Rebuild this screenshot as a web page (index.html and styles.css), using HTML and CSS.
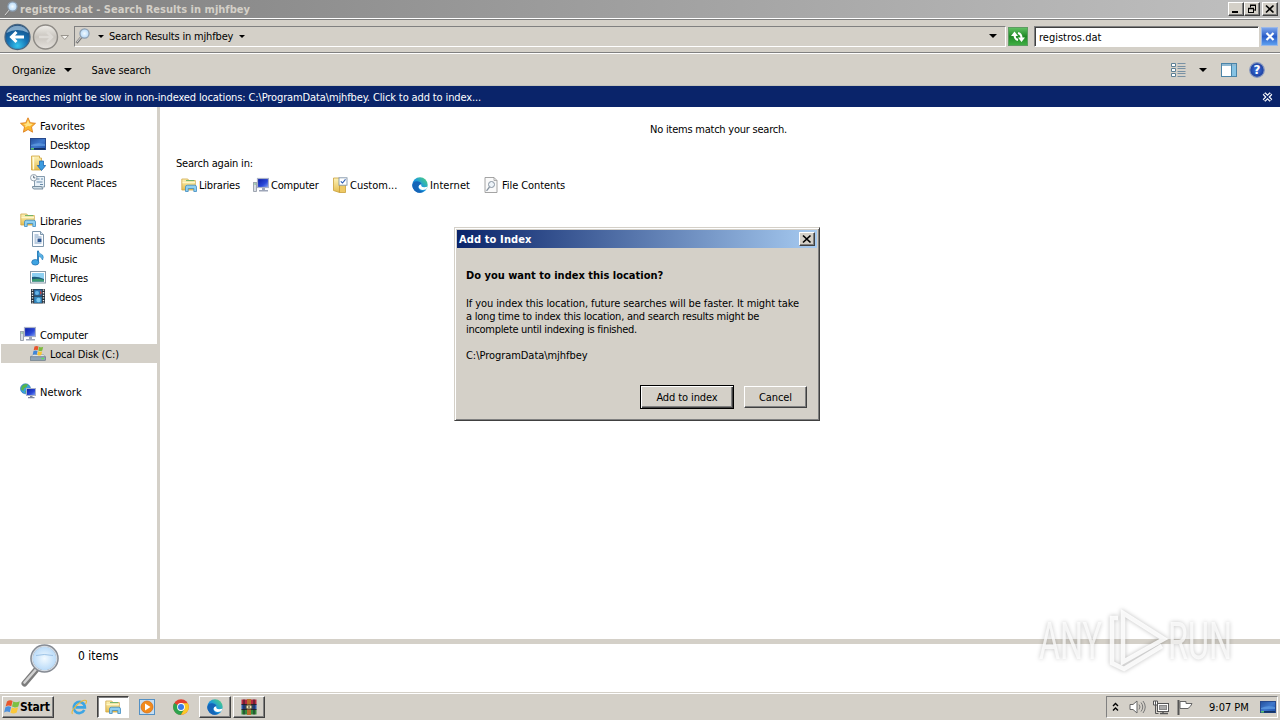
FILE: index.html
```html
<!DOCTYPE html>
<html lang="en">
<head>
    <meta charset="utf-8">
    <title>registros.dat - Search Results in mjhfbey</title>
    <link rel="stylesheet" href="styles.css">
</head>
<body>
    <!-- icon sprites -->
    <svg class="sprites" width="0" height="0">
        <defs>
            <linearGradient id="gFolder" x1="0" y1="0" x2="0" y2="1"><stop offset="0" stop-color="#fdf3b8"/><stop offset="1" stop-color="#e5bd4f"/></linearGradient>
            <linearGradient id="gScreen" x1="0" y1="0" x2="1" y2="1"><stop offset="0" stop-color="#24509c"/><stop offset=".5" stop-color="#3f78cc"/><stop offset="1" stop-color="#1c4faa"/></linearGradient>
            <linearGradient id="gMonitor" x1="0" y1="0" x2="1" y2="1"><stop offset="0" stop-color="#0a1aa0"/><stop offset=".6" stop-color="#2a48d8"/><stop offset="1" stop-color="#8aa8f8"/></linearGradient>
            <radialGradient id="gLens"><stop offset="0" stop-color="#f2faff"/><stop offset="1" stop-color="#b4d8f8"/></radialGradient>
            <linearGradient id="gEdge" x1="0" y1="1" x2="1" y2="0"><stop offset="0" stop-color="#0f5cb8"/><stop offset=".5" stop-color="#1c9ade"/><stop offset="1" stop-color="#54d870"/></linearGradient>
            <radialGradient id="gBack" cx=".5" cy=".85" r=".8"><stop offset="0" stop-color="#35c4ee"/><stop offset=".5" stop-color="#1773b4"/><stop offset="1" stop-color="#164a80"/></radialGradient>
            <linearGradient id="gFwd" x1="0" y1="0" x2="0" y2="1"><stop offset="0" stop-color="#f0eeea"/><stop offset=".5" stop-color="#c9c5be"/><stop offset="1" stop-color="#e6e3de"/></linearGradient>
            <radialGradient id="gHelp"><stop offset="0" stop-color="#3e74e0"/><stop offset="1" stop-color="#1a3c9c"/></radialGradient>
        </defs>
        <symbol id="search" viewBox="0 0 16 16">
            <path d="M1.5 15L6.5 9" stroke="#777" stroke-width="2.6"/>
            <path d="M1.8 14.2L6.2 9" stroke="#ddd" stroke-width="1"/>
            <circle cx="9.5" cy="5.5" r="4.6" fill="url(#gLens)" stroke="#8b9db0" stroke-width="1.2"/>
        </symbol>
        <symbol id="star" viewBox="0 0 16 16">
            <path d="M8 .8l2.2 4.9 5.3.6-4 3.6 1.1 5.3L8 12.5l-4.6 2.7 1.1-5.3-4-3.6 5.3-.6z" fill="#fbb72c" stroke="#de8124" stroke-width=".9"/>
            <path d="M8 3l1.4 3.6 3.4.4-3 2.2L8 9 5 10.5 5.6 8 3 7l3.6-.4z" fill="#ffe48a"/>
        </symbol>
        <symbol id="desktop" viewBox="0 0 16 16">
            <rect x=".5" y="2.5" width="15" height="11" fill="url(#gScreen)" stroke="#27498c"/>
            <path d="M1 9q6-3 14-1v2H1z" fill="#69a7e8" opacity=".6"/>
            <rect x="1" y="12" width="14" height="1.6" fill="#123265"/><rect x="1" y="12" width="3" height="1.6" fill="#58c070"/>
        </symbol>
        <symbol id="downloads" viewBox="0 0 16 16">
            <path d="M1.5 1h8v2h2v12h-10z" fill="url(#gFolder)" stroke="#d1a33d" stroke-width=".8"/>
            <path d="M3.5 2v12.5" stroke="#fffbe0" stroke-width="1.4"/>
            <path d="M9.5 6h4v4.5h2.2L11.5 15.5 7.3 10.5h2.2z" fill="#3b9be0" stroke="#1c65ae" stroke-width=".8"/>
        </symbol>
        <symbol id="recent" viewBox="0 0 16 16">
            <path d="M4.5 2.5h10v10.5h-10z" fill="#e8f1f8" stroke="#7890a4" stroke-width=".9"/>
            <path d="M6.5 5h3M11 5h2M6.5 8h6M10 10.5h3" stroke="#6789a8" stroke-width="1.2"/>
            <path d="M2.5 12.5h9l1.5 2.5h-9q-2-.5-1.5-2.5z" fill="#cfdde6" stroke="#6f8798" stroke-width=".9"/>
            <circle cx="3.7" cy="3.7" r="3.2" fill="#f8fbfd" stroke="#8c9aa6" stroke-width=".9"/>
            <path d="M3.7 1.7v2.2h1.6" fill="none" stroke="#567"/>
        </symbol>
        <symbol id="libraries" viewBox="0 0 16 16">
            <path d="M.8 2h6l1 1.5h6.5V13H.8z" fill="url(#gFolder)" stroke="#cfa748" stroke-width=".8"/>
            <path d="M5 3.6h8" stroke="#6ab26a"/><path d="M1.5 5.5h12.5" stroke="#fff6c8" stroke-width="1.4"/>
            <path d="M4.5 14.5V10q0-1.8 1.8-1.8h7.4q1.8 0 1.8 1.8v4.5h-2.7V11.5H7.2v3z" fill="#8fd0f1" stroke="#3f8bc0" stroke-width=".8"/>
        </symbol>
        <symbol id="documents" viewBox="0 0 16 16">
            <path d="M2.5.5h8L13.5 3.5v12h-11z" fill="#fbfdff" stroke="#7f97ac"/>
            <path d="M10.5.5v3h3" fill="#d5e4f0" stroke="#7f97ac"/>
            <path d="M4.5 4h4M4.5 6h7M4.5 8h2M4.5 10h2M4.5 12h7" stroke="#6a90b8" stroke-width=".9"/>
            <rect x="7.5" y="7.5" width="4" height="3.5" fill="#2c5590"/>
        </symbol>
        <symbol id="music" viewBox="0 0 16 16">
            <path d="M8 1v11" stroke="#1f78b8" stroke-width="1.8"/>
            <path d="M8 .5q.5 3 4.5 4.5 1.5 2 0 5Q11.5 6.500 8 6z" fill="#58b2e6" stroke="#1f78b8" stroke-width=".6"/>
            <ellipse cx="5.3" cy="12.3" rx="3.6" ry="2.8" fill="#3fa4e2" stroke="#1c6cab" stroke-width=".7"/>
        </symbol>
        <symbol id="pictures" viewBox="0 0 16 16">
            <rect x=".5" y="2.5" width="15" height="11.5" fill="#fff" stroke="#8a9aa8"/>
            <rect x="2" y="4" width="12" height="8.5" fill="#8ed0f2"/>
            <path d="M2 8q5-1 12 2v2.5H2z" fill="#1e5c7c"/><path d="M2 10.5q6-1.500 12 .5v1.500H2z" fill="#3c9c70"/>
        </symbol>
        <symbol id="videos" viewBox="0 0 16 16">
            <rect x="1" y="1" width="14" height="14.5" fill="#26313d"/>
            <path d="M2.5 1.5v14M13.5 1.5v14" stroke="#eee" stroke-width="1.4" stroke-dasharray="1.3 1.3"/>
            <rect x="4.2" y="1.6" width="7.6" height="6" fill="#2f72ae"/><rect x="4.2" y="8.6" width="7.6" height="6.3" fill="#3388c0"/>
            <circle cx="7" cy="5" r="2" fill="#65b6e8"/><circle cx="8.5" cy="12" r="2.2" fill="#7dcaf0"/><path d="M10 2l2 3-2 2z" fill="#b54747"/>
        </symbol>
        <symbol id="computer" viewBox="0 0 16 16">
            <rect x=".6" y="5.500" width="2.8" height="9" fill="#d9dde3" stroke="#8b93a0" stroke-width=".8"/><path d="M1.500 7h1.200" stroke="#3a4"/>
            <rect x="4.5" y="1.5" width="11" height="9" fill="url(#gMonitor)" stroke="#aab2c8" stroke-width="1.2"/>
            <path d="M9 11h3v2h3v1.500H6V13h3z" fill="#9da5b8"/>
        </symbol>
        <symbol id="disk" viewBox="0 0 16 16">
            <path d="M3 9.5h10.5l2 2.5H.8z" fill="#dfe5ea" stroke="#8a97a3" stroke-width=".6"/>
            <rect x=".6" y="11.8" width="14.9" height="3.5" fill="#8fa4b4" stroke="#5c6f80" stroke-width=".6"/><path d="M11.5 13.5h2.5" stroke="#5e5" stroke-width="1.3"/>
            <path d="M4.5 1.500q2-1.200 4 0l-.8 3.800q-2-1-4 0z" fill="#e8532c"/><path d="M9 1.800q2 1 4.200 0L12.300 5.500q-2 1-4 0z" fill="#7cba3c"/>
            <path d="M3.500 6q2-1 4 0L6.700 9.800q-2-1-4 0z" fill="#3f86d8"/><path d="M8.100 6.300q2 1 4 0l-.8 3.700q-2 1-4 0z" fill="#f8c52c"/>
        </symbol>
        <symbol id="network" viewBox="0 0 16 16">
            <circle cx="5.5" cy="5.800" r="5" fill="#3aa0de" stroke="#256aa8" stroke-width=".6"/>
            <path d="M2 3q3-3 6-1.500L6.500 4 4 5.500 3.500 8 1 6.500zM5 8l3 1-2 1.700z" fill="#56b64a"/>
            <rect x="6.500" y="5.500" width="9" height="7" fill="url(#gMonitor)" stroke="#aab2c8"/><path d="M10 13h2.500v1h2v1.300H8V14h2z" fill="#7d859a"/>
        </symbol>
        <symbol id="custom" viewBox="0 0 16 16">
            <path d="M1.500 1h6v14.500l-6-2z" fill="url(#gFolder)" stroke="#c99f3a" stroke-width=".8"/>
            <path d="M7.500 7h6v8.500h-6z" fill="#eec965" stroke="#c99f3a" stroke-width=".8"/>
            <rect x="7" y=".8" width="8" height="7.4" fill="#fff" stroke="#8195a8" stroke-width=".9"/><path d="M8.800 4.300l1.700 1.700 3-3.600" fill="none" stroke="#2a5bb5" stroke-width="1.1"/>
        </symbol>
        <symbol id="edge" viewBox="0 0 16 16">
            <circle cx="8" cy="8" r="7.7" fill="url(#gEdge)"/>
            <path d="M.3 8Q1 3.800 5.500 4.200 9.500 4.800 9.500 8 7 7 6.300 9.500 6 14 11.500 14.800 4 17.500 1.200 11.500.2 10 .3 8z" fill="#1465b8"/>
            <path d="M9.300 7.200Q8.300 11.300 15.500 9.800L14.300 12.300Q8 14.500 6.500 10 6.800 7.500 9.300 7.200z" fill="#fff"/>
        </symbol>
        <symbol id="filec" viewBox="0 0 16 16">
            <path d="M2 .5h9L14 3.500v12H2z" fill="#fafafa" stroke="#9a9a9a" stroke-width=".9"/><path d="M11 .5v3h3" fill="none" stroke="#9a9a9a" stroke-width=".8"/>
            <circle cx="8.5" cy="7.5" r="3" fill="#eef4f9" stroke="#8793a0"/><path d="M6.500 10L3.500 13.800" stroke="#8793a0" stroke-width="1.3"/>
        </symbol>
        <symbol id="ie" viewBox="0 0 16 16">
            <path d="M13.300 11A5.600 5.600 0 1 1 13.900 8.400H4.500" fill="none" stroke="#3ca5e4" stroke-width="2.6"/>
            <path d="M1.500 15Q-.5 12.500 5.500 6.500 12 .3 15 1.500 16.200 2.500 14.500 5" fill="none" stroke="#e9b93a" stroke-width="1.1"/>
        </symbol>
        <symbol id="wmp" viewBox="0 0 16 16">
            <rect x=".5" y=".5" width="15" height="15" fill="#c6def2" stroke="#5390c4"/>
            <circle cx="8" cy="8" r="6" fill="#f28a1c" stroke="#d46a10" stroke-width=".7"/><path d="M6 4.500v7L11.500 8z" fill="#fff"/>
        </symbol>
        <symbol id="chrome" viewBox="0 0 16 16">
            <circle cx="8" cy="8" r="7.8" fill="#e3402f"/>
            <path d="M8 8L1.200 4.100A7.800 7.800 0 0 0 8 15.800L11.400 10z" fill="#2da34e"/>
            <path d="M8 4.300h6.900A7.800 7.800 0 0 1 8 15.800L11.400 10z" fill="#fbca28"/>
            <circle cx="8" cy="8" r="3.9" fill="#fff"/><circle cx="8" cy="8" r="3" fill="#3b7ce8"/>
        </symbol>
        <symbol id="rar" viewBox="0 0 16 16">
            <rect x=".5" y=".5" width="15" height="5" fill="#b52840"/><rect x=".5" y="5.5" width="15" height="5" fill="#2c56a8"/><rect x=".5" y="10.5" width="15" height="5" fill="#348a3c"/>
            <path d="M.5 5.500h15M.5 10.500h15M3 .5v15M13 .5v15" stroke="#1c1c28" stroke-width=".9"/>
            <rect x="6" y="0" width="4" height="16" fill="#b96d2c"/><rect x="5" y="6" width="6" height="4" fill="#f1e2b8" stroke="#332"/><path d="M8 7v2" stroke="#332"/>
        </symbol>
        <symbol id="flag" viewBox="0 0 16 16">
            <path d="M3 2.500Q6 .3 8.600 2L7.300 7.300Q4.500 5.600 1.600 7.500z" fill="#e8562c"/>
            <path d="M9.300 2.400Q12 4 15.800 2.200L14.300 7.400Q11 9.300 8 7.600z" fill="#7cc043"/>
            <path d="M1.400 8.300Q4.500 6.500 7.100 8.100L5.800 13.300Q3 11.600.1 13.500z" fill="#4b90dd"/>
            <path d="M7.800 8.500Q11 10 14.100 8.300L12.700 13.500Q9.500 15.300 6.500 13.700z" fill="#fbc83a"/>
        </symbol>
    </svg>

    <div class="titlebar">
        <svg class="ico"><use href="#search"/></svg>
        <span class="title">registros.dat - Search Results in mjhfbey</span>
        <div class="winbtns">
            <span class="winbtn"><svg width="12" height="10"><path d="M2 8h6" stroke="#000" stroke-width="2"/></svg></span>
            <span class="winbtn"><svg width="12" height="10"><path d="M4 1.500h6M4.500 1v2.500M9.500 1v5.500M8 6h2M2 4.500h6M2.500 4v5M7.500 4v5M2 8.500h6" fill="none" stroke="#000"/><path d="M4 1.200h6M2 4.500h6" stroke="#000" stroke-width="1.6"/></svg></span>
            <span class="winbtn close"><svg width="12" height="10"><path d="M2 1.500l7.500 7M9.500 1.500l-7.500 7" stroke="#000" stroke-width="1.7"/></svg></span>
        </div>
    </div>

    <div class="navbar">
        <svg class="travel" viewBox="0 0 70 30">
            <circle cx="17.5" cy="15" r="12.5" fill="url(#gBack)" stroke="#4a6680" stroke-width="1.3"/>
            <path d="M6.500 11Q17 5 28.500 11 26 4 17.500 3.800 9 4 6.500 11z" fill="#b9d6ea" opacity=".65"/>
            <path d="M11 15h13M16.500 10l-5 5 5 5" fill="none" stroke="#fff" stroke-width="3"/>
            <circle cx="45.5" cy="15" r="12" fill="url(#gFwd)" stroke="#8d8a85" stroke-width="1.4"/>
            <path d="M39 15h13M47 10l5 5-5 5" fill="none" stroke="#dedbd6" stroke-width="2.5"/>
            <path d="M61 13.500h7.500l-3.700 4z" fill="#f6f4f0" stroke="#99958e"/>
        </svg>
        <div class="address">
            <svg class="ico"><use href="#search"/></svg>
            <i class="arrow"></i>
            <span class="crumb">Search Results in mjhfbey</span>
            <i class="arrow"></i>
            <i class="arrow drop"></i>
        </div>
        <span class="refresh"><svg width="20" height="19" viewBox="0 0 20 19"><path d="M3 9L6.500 4.500 10 9zM10 10.500l3.500 4.500 3.500-4.500z" fill="#fff"/><path d="M6.500 8q0 4 3.500 5M13.500 11q0-4-3.500-5" stroke="#fff" stroke-width="2" fill="none"/></svg></span>
        <div class="searchbox">registros.dat</div>
        <span class="clear"><svg width="16" height="17"><path d="M4.500 5l7 7M11.500 5l-7 7" stroke="#fff" stroke-width="2.2"/></svg></span>
    </div>

    <div class="toolbar">
        <span class="organize">Organize</span><i class="arrow big"></i>
        <span class="save">Save search</span>
        <div class="tools">
            <svg width="15" height="15"><path d="M.5 .5h4v3h-4zM.5 5.500h4v3h-4zM.5 10.500h4v3h-4z" fill="#fff" stroke="#5c7f94"/><path d="M6.500 .5h8M6.500 3.500h8M6.500 5.500h8M6.500 8.500h8M6.500 10.500h8M6.500 13.500h8" stroke="#7891a4"/></svg>
            <i class="arrow big"></i>
            <svg class="pane" width="16" height="14"><rect x=".5" y=".5" width="15" height="13" fill="#fff" stroke="#4a84a8"/><path d="M1 2h14" stroke="#8fb9d3" stroke-width="2"/><rect x="11" y="3" width="4" height="10" fill="#86c3e4"/><path d="M10.500 1v12" stroke="#4a84a8"/></svg>
            <svg width="16" height="16"><circle cx="8" cy="8" r="7.3" fill="url(#gHelp)" stroke="#8798c0" stroke-width="1.2"/><text x="8" y="12.3" text-anchor="middle" class="q">?</text></svg>
        </div>
    </div>

    <div class="infobar">
        <span>Searches might be slow in non-indexed locations: C:\ProgramData\mjhfbey. Click to add to index...</span>
        <svg width="11" height="10"><path d="M2 1.500l7 7M9 1.500l-7 7" stroke="#fff" stroke-width="3.8"/><path d="M2.300 1.800l6.400 6.400M8.700 1.800l-6.400 6.400" stroke="#0a246a" stroke-width="1.3"/></svg>
    </div>

    <div class="main">
        <div class="sidebar">
            <div class="row"><svg class="ico"><use href="#star"/></svg><span class="loose">Favorites</span></div>
            <div class="row sub"><svg class="ico"><use href="#desktop"/></svg><span>Desktop</span></div>
            <div class="row sub"><svg class="ico"><use href="#downloads"/></svg><span>Downloads</span></div>
            <div class="row sub"><svg class="ico"><use href="#recent"/></svg><span>Recent Places</span></div>
            <div class="row head"><svg class="ico"><use href="#libraries"/></svg><span>Libraries</span></div>
            <div class="row sub"><svg class="ico"><use href="#documents"/></svg><span>Documents</span></div>
            <div class="row sub"><svg class="ico"><use href="#music"/></svg><span>Music</span></div>
            <div class="row sub"><svg class="ico"><use href="#pictures"/></svg><span>Pictures</span></div>
            <div class="row sub"><svg class="ico"><use href="#videos"/></svg><span>Videos</span></div>
            <div class="row head"><svg class="ico"><use href="#computer"/></svg><span>Computer</span></div>
            <div class="row sub selected"><svg class="ico"><use href="#disk"/></svg><span>Local Disk (C:)</span></div>
            <div class="row head"><svg class="ico"><use href="#network"/></svg><span class="loose">Network</span></div>
        </div>
        <div class="content">
            <p class="empty">No items match your search.</p>
            <p class="again">Search again in:</p>
            <div class="places">
                <span class="place p1"><svg class="ico"><use href="#libraries"/></svg>Libraries</span>
                <span class="place p2"><svg class="ico"><use href="#computer"/></svg>Computer</span>
                <span class="place p3"><svg class="ico"><use href="#custom"/></svg>Custom...</span>
                <span class="place p4"><svg class="ico"><use href="#edge"/></svg>Internet</span>
                <span class="place p5"><svg class="ico"><use href="#filec"/></svg>File Contents</span>
            </div>
        </div>
    </div>

    <div class="details">
        <svg width="40" height="44" viewBox="0 0 40 44">
            <path d="M4.500 39.500L16 26" stroke="#7c7c7c" stroke-width="6" stroke-linecap="round"/><path d="M4.500 38.500L15.500 26" stroke="#d2d2d2" stroke-width="2.6" stroke-linecap="round"/>
            <circle cx="24.5" cy="14.5" r="13" fill="url(#gLens)" stroke="#858a92" stroke-width="2.6"/><circle cx="24.5" cy="14.5" r="12.2" fill="none" stroke="#d5dce4" stroke-width="1.2"/>
            <path d="M16 11.500q8-2 17 0" fill="none" stroke="#9dc3e6"/>
        </svg>
        <span>0 items</span>
    </div>

    <div class="taskbar">
        <div class="start"><svg width="16" height="16"><use href="#flag"/></svg><span>Start</span></div>
        <div class="task"><svg class="ico"><use href="#ie"/></svg></div>
        <div class="task active"><svg class="ico"><use href="#libraries"/></svg></div>
        <div class="task"><svg class="ico"><use href="#wmp"/></svg></div>
        <div class="task"><svg class="ico"><use href="#chrome"/></svg></div>
        <div class="task raised"><svg class="ico"><use href="#edge"/></svg></div>
        <div class="task raised"><svg class="ico"><use href="#rar"/></svg></div>
        <div class="tray">
            <svg width="7" height="10"><path d="M1 4l2.500-2.500L6 4M1 8.500L3.500 6 6 8.500" fill="none" stroke="#000" stroke-width="1.4"/></svg>
            <svg class="vol" width="17" height="14"><path d="M1 4.500h3L8 1v12L4 9.500H1z" fill="#fff" stroke="#666"/><path d="M10 4.500q2 2.500 0 5M12 2.500q3.500 4.500 0 9M14 1q4.500 6 0 12" fill="none" stroke="#777"/></svg>
            <svg class="net" width="16" height="15"><rect x="4.5" y="3.5" width="11" height="8" fill="#fff" stroke="#555"/><rect x="6.500" y="5.500" width="7" height="4" fill="#aaa" stroke="#888"/><path d="M7 13.500h8M10 12v2" stroke="#555" stroke-width="1.5"/><path d="M.5 1v4h4V1z" fill="#fff" stroke="#555"/><path d="M2.500 1v12.500h3" fill="none" stroke="#555"/></svg>
            <svg class="alert" width="17" height="15"><path d="M1.500 0v15" stroke="#555" stroke-width="2"/><path d="M3 1.500h6v2h6q-1 3-4 5H3z" fill="#fff" stroke="#666"/></svg>
            <span class="clock">9:07 PM</span>
            <svg class="ico"><use href="#desktop"/></svg>
        </div>
    </div>

    <div class="dialog">
        <div class="dlg-title"><span>Add to Index</span><span class="winbtn"><svg width="12" height="10"><path d="M2 1.500l7.500 7M9.500 1.500l-7.500 7" stroke="#000" stroke-width="1.7"/></svg></span></div>
        <div class="dlg-body">
            <h1>Do you want to index this location?</h1>
            <p><span class="l1">If you index this location, future searches will be faster. It might take</span><br><span class="l2">a long time to index this location, and search results might be</span><br><span class="l3">incomplete until indexing is finished.</span></p>
            <p class="path">C:\ProgramData\mjhfbey</p>
            <div class="buttons">
                <button class="default">Add to index</button>
                <button>Cancel</button>
            </div>
        </div>
    </div>

    <svg class="watermark" width="220" height="72" viewBox="0 0 220 72">
        <text x="8" y="52" textLength="63" lengthAdjust="spacingAndGlyphs">ANY</text>
        <text x="137" y="52" textLength="64" lengthAdjust="spacingAndGlyphs">RUN</text>
        <path d="M92 6L133 32 92 55zM87 11h-6v45l12 6 38-23" />
    </svg>
</body>
</html>
```
FILE: styles.css
```css
* {
    box-sizing: border-box;
}
body {
    margin: 0;
    width: 1280px;
    height: 720px;
    overflow: hidden;
    display: flex;
    flex-direction: column;
    background: #d4d0c8;
    color: #000;
    font-family: Tahoma, "DejaVu Sans Condensed", "DejaVu Sans", sans-serif;
    font-stretch: condensed;
    font-size: 11px;
    line-height: 13px;
    white-space: nowrap;
}
p, h1 {
    margin: 0;
}
svg {
    display: block;
    flex: none;
}
.sprites {
    position: absolute;
}
.ico {
    width: 16px;
    height: 16px;
}
.arrow {
    flex: none;
    border: 3px solid transparent;
    border-top: 3px solid #000;
    border-bottom: 0;
}
.arrow.big {
    border-width: 4px 4px 0;
}

/* title bar */
.titlebar {
    height: 18px;
    flex: none;
    display: flex;
    align-items: center;
    padding: 0 2px 0 3px;
    background: linear-gradient(to right, #808080, #c0c0c0);
    color: #d4d0c8;
    font-weight: bold;
}
.titlebar .title {
    margin-left: 1px;
    letter-spacing: .02px;
}
.winbtns {
    margin-left: auto;
    display: flex;
}
.winbtn {
    width: 16px;
    height: 14px;
    display: flex;
    align-items: center;
    justify-content: center;
    background: #d4d0c8;
    border: 1px solid;
    border-color: #fff #404040 #404040 #fff;
    box-shadow: inset -1px -1px #808080;
}
.winbtn.close {
    margin-left: 2px;
}

/* address bar */
.navbar {
    height: 36px;
    flex: none;
    display: flex;
    align-items: center;
    border-top: 1px solid #fff;
    border-bottom: 1px solid #fff;
    box-shadow: inset 0 1px #808080, inset 0 -1px #808080;
}
.travel {
    width: 70px;
    height: 30px;
    margin-top: 2px;
}
.address {
    width: 932px;
    height: 21px;
    margin-left: 4px;
    display: flex;
    align-items: center;
    border: 1px solid;
    border-color: #808080 #fff #fff #808080;
}
.address .arrow {
    margin-left: 7px;
}
.crumb {
    margin-left: 5px;
    letter-spacing: -.17px;
}
.address .crumb + .arrow {
    margin-left: 6px;
}
.address .drop {
    border-width: 4px 4px 0;
    margin: 0 8px 0 auto;
}
.refresh {
    width: 20px;
    height: 19px;
    margin-left: 2px;
    background: linear-gradient(#5fbf62, #1f8a25 50%, #3fae43);
    border: 1px solid #5d9c62;
}
.refresh svg {
    margin: -1px;
}
.searchbox {
    width: 225px;
    height: 21px;
    margin-left: 6px;
    padding: 4px 4px 0;
    background: #fff;
    border: 1px solid;
    border-color: #808080 #fff #fff #808080;
    box-shadow: inset 1px 1px #404040;
}
.clear {
    width: 17px;
    height: 19px;
    margin-left: 2px;
    background: linear-gradient(#7aa4ea, #2a5cc8 50%, #5da0f0);
    border: 1px solid #9bb8e8;
}

/* command bar */
.toolbar {
    height: 32px;
    flex: none;
    display: flex;
    align-items: center;
    padding: 1px 15px 0 12px;
    border-bottom: 1px solid #c4c4bc;
}
.organize {
    letter-spacing: -.1px;
}
.toolbar > .arrow {
    margin-left: 8px;
}
.save {
    margin-left: 20px;
    letter-spacing: -.1px;
}
.tools {
    margin-left: auto;
    display: flex;
    align-items: center;
}
.tools .arrow {
    margin: 0 14px 0 13px;
}
.pane {
    margin-right: 12px;
}
.q {
    font: bold 12px "DejaVu Sans", sans-serif;
    fill: #fff;
}
.infobar {
    height: 21px;
    flex: none;
    display: flex;
    align-items: center;
    justify-content: space-between;
    padding: 1px 7px 0 6px;
    background: #0a246a;
    color: #fff;
    letter-spacing: -.123px;
}

/* folder tree and results */
.main {
    height: 532px;
    flex: none;
    display: flex;
    background: #fff;
}
.sidebar {
    width: 160px;
    padding: 9px 0 0 1px;
    border-right: 3px solid #d4d0c8;
    letter-spacing: -.15px;
}
.row {
    height: 19px;
    display: flex;
    align-items: center;
    gap: 4px;
    padding-left: 19px;
}
.row .ico {
    margin-top: -2px;
}
.row span {
    padding-top: 1px;
}
.row.head {
    margin-top: 19px;
}
.row.sub {
    padding-left: 29px;
}
.loose {
    letter-spacing: .05px;
}
.selected {
    background: #d4d0c8;
}
.content {
    flex: 1;
    padding: 16px 19px 0 16px;
}
.empty {
    text-align: center;
    letter-spacing: -.23px;
}
.again {
    margin-top: 21px;
    letter-spacing: -.2px;
}
.places {
    display: flex;
    margin-top: 7px;
    padding-left: 5px;
}
.place {
    display: flex;
    align-items: center;
    gap: 2px;
    letter-spacing: -.2px;
}
.p1 { width: 72px; }
.p2 { width: 79px; }
.p3 { width: 80px; letter-spacing: 0; }
.p4 { width: 71px; letter-spacing: .1px; }
.p5 { gap: 3px; letter-spacing: -.08px; }

.details {
    height: 53px;
    flex: none;
    display: flex;
    padding-left: 20px;
    background: #fff;
    border-top: 5px solid #d4d0c8;
    font-size: 12px;
}
.details span {
    margin: 6px 0 0 18px;
}

/* taskbar */
.taskbar {
    height: 28px;
    flex: none;
    display: flex;
    align-items: center;
    padding: 1px 2px 0;
    border-top: 1px solid #d4d0c8;
    box-shadow: inset 0 1px #fff;
}
.start {
    width: 52px;
    height: 22px;
    display: flex;
    align-items: center;
    margin-right: 9px;
    padding-left: 1px;
    border: 1px solid;
    border-color: #fff #404040 #404040 #fff;
    box-shadow: inset -1px -1px #808080;
    font-size: 12px;
    font-weight: bold;
    letter-spacing: -.2px;
}
.task {
    width: 32px;
    height: 22px;
    margin-right: 2px;
    display: flex;
    align-items: center;
    justify-content: center;
    border: 1px solid transparent;
}
.raised {
    border-color: #fff #404040 #404040 #fff;
    box-shadow: inset -1px -1px #808080;
}
.active {
    background: #fff;
    border-color: #404040 #fff #fff #404040;
    box-shadow: inset 1px 1px #808080;
}
.tray {
    width: 172px;
    height: 22px;
    margin-left: auto;
    display: flex;
    align-items: center;
    padding-left: 5px;
    border: 1px solid;
    border-color: #808080 #fff #fff #808080;
}
.vol {
    margin-left: 10px;
}
.net {
    margin-left: 7px;
}
.alert {
    margin-left: 8px;
}
.clock {
    width: 40px;
    margin: 0 11px 0 15px;
}

/* confirmation dialog */
.dialog {
    position: absolute;
    left: 454px;
    top: 227px;
    width: 366px;
    height: 194px;
    padding: 2px;
    background: #d4d0c8;
    border: 1px solid;
    border-color: #d4d0c8 #404040 #404040 #d4d0c8;
    box-shadow: inset 1px 1px #fff, inset -1px -1px #808080;
}
.dlg-title {
    height: 18px;
    display: flex;
    align-items: center;
    justify-content: space-between;
    padding: 0 2px;
    background: linear-gradient(to right, #0a246a, #a6caf0);
    color: #fff;
    font-weight: bold;
    letter-spacing: .12px;
}
.dlg-body {
    padding: 21px 10px 0 9px;
}
.dlg-body h1 {
    margin-bottom: 15px;
    font-size: 11px;
}
.l1 { letter-spacing: -.1px; }
.l2 { letter-spacing: -.23px; }
.l3 { letter-spacing: -.3px; }
.path {
    margin-top: 13px;
    letter-spacing: -.05px;
}
.buttons {
    display: flex;
    justify-content: flex-end;
    gap: 10px;
    margin-top: 23px;
}
.buttons button {
    width: 63px;
    height: 22px;
    margin-top: 1px;
    padding: 0;
    background: #d4d0c8;
    border: 1px solid;
    border-color: #fff #404040 #404040 #fff;
    box-shadow: inset -1px -1px #808080;
    font: inherit;
    letter-spacing: -.1px;
}
.buttons .default {
    width: 94px;
    height: 24px;
    margin-top: 0;
    border-color: #000;
    box-shadow: inset 1px 1px #fff, inset -1px -1px #404040, inset -2px -2px #808080;
}

.watermark {
    position: absolute;
    left: 1031px;
    top: 607px;
    overflow: visible;
    fill: #fff;
    fill-opacity: .75;
    filter: drop-shadow(0 0 2px rgba(0, 0, 0, .3));
    font: 52px/60px Roboto, sans-serif;
}
.watermark path {
    fill: none;
    stroke: #fff;
    stroke-opacity: .85;
    stroke-width: 4.5;
}
```
